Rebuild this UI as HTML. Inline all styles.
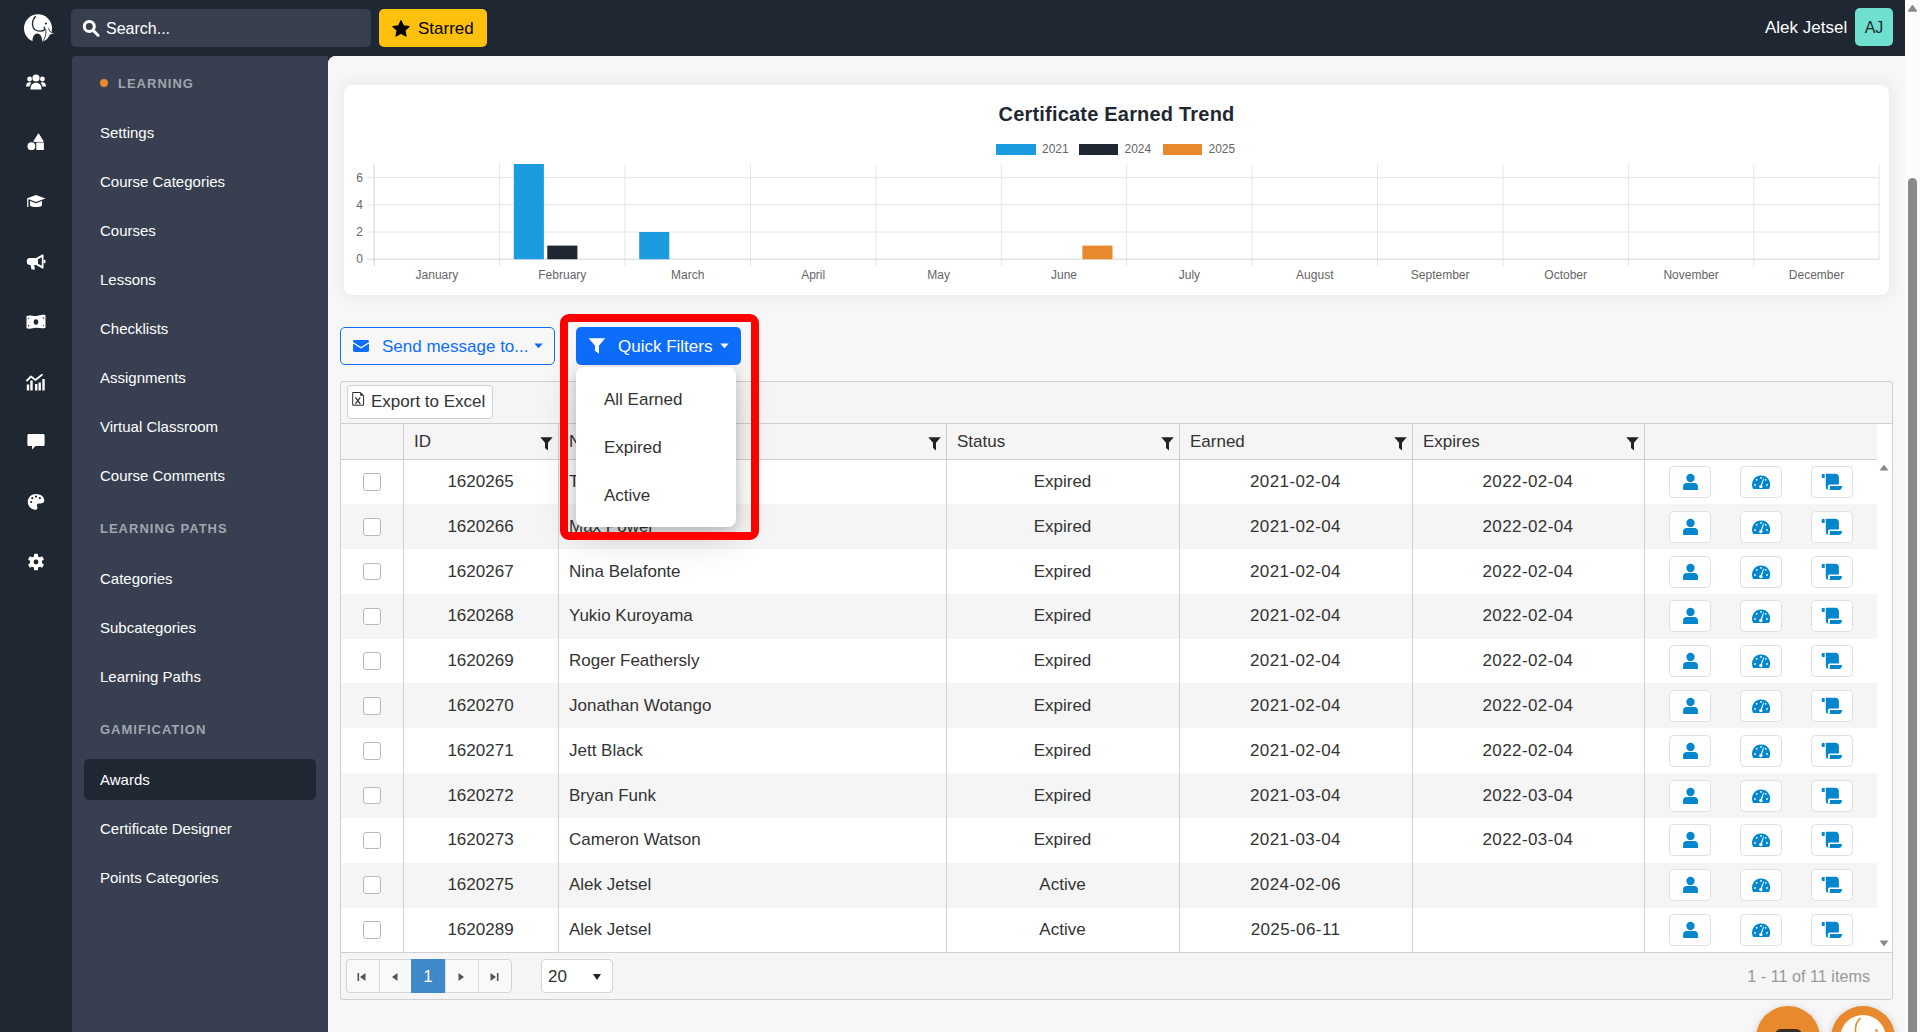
<!DOCTYPE html>
<html><head><meta charset="utf-8">
<style>
*{box-sizing:border-box;margin:0;padding:0}
html,body{width:1920px;height:1032px;overflow:hidden;background:#1f2733;font-family:"Liberation Sans",sans-serif}
.abs{position:absolute}
#top{left:0;top:0;width:1905px;height:56px;background:#1f2733}
#rail{left:0;top:0;width:72px;height:1032px;background:#1f2733}
#search{left:71px;top:9px;width:300px;height:38px;background:#373f4f;border-radius:5px}
#starred{left:379px;top:9px;width:108px;height:38px;background:#fdc10d;border-radius:5px}
#avatar{left:1855px;top:8px;width:38px;height:38px;background:#6fdfcf;border-radius:5px;color:#1f2733;font-size:16px;text-align:center;line-height:40px}
#side{left:72px;top:56px;width:256px;height:976px;background:#373f50;border-top-left-radius:4px}
#main{left:328px;top:56px;width:1577px;height:976px;background:#f7f7f7;border-top-left-radius:8px;overflow:hidden}
#vscroll{left:1905px;top:0;width:15px;height:1032px;background:#fcfcfc}
.abtn{width:41.7px;height:32px;background:#fff;border:1px solid #dde0e5;border-radius:4.5px}
.dt{letter-spacing:0.4px}
.nav{position:absolute;left:100px;color:#fff;font-size:15px;line-height:20px;white-space:nowrap}
.sec{position:absolute;left:100px;color:#a1a6ae;font-size:13px;line-height:20px;font-weight:bold;letter-spacing:1.0px;white-space:nowrap}
</style></head><body>
<div id="top" class="abs"></div>
<div id="rail" class="abs"></div>

<svg class="abs" style="left:18px;top:8px" width="40" height="40" viewBox="0 0 40 40">
 <circle cx="20" cy="20.3" r="14" fill="#fff"/>
 <path d="M14.4 35 C14.2 29 16 25.6 19.3 25.6 C22.6 25.6 24.2 29 24.2 35 Z" fill="#1f2733"/>
 <path d="M4 30 L4 40 L14.6 40 L14.4 33.5 Z" fill="#1f2733"/>
 <path d="M26.5 36 L32 26.5 L36 26.5 L36 36 Z" fill="#1f2733"/>
 <path d="M17.8 8.2 C13.5 12 13.5 19 17 21.8 C20 23.8 24.5 23.3 27 21.6 L26 18.8" fill="none" stroke="#1f2733" stroke-width="1.3"/>
 <path d="M27.5 21.6 C28.5 24 28 29 24.8 33" fill="none" stroke="#1f2733" stroke-width="0.9"/>
 <path d="M30.5 20 C31 22.8 32 24.2 34 24.8 L36 25.6 L29.5 26.6 Z" fill="#fff"/>
 <path d="M30.6 20.2 C31.2 22.6 32.2 24 33.6 24.5" fill="none" stroke="#1f2733" stroke-width="0.9"/>
 <circle cx="27.9" cy="15.5" r="1.1" fill="#1f2733"/>
</svg>
<!-- users -->
<svg class="abs" style="left:26px;top:74px" width="20" height="16" viewBox="0 0 20 16">
 <circle cx="10" cy="4" r="3.6" fill="#fff"/>
 <circle cx="3.6" cy="5" r="2.4" fill="#fff"/><circle cx="16.4" cy="5" r="2.4" fill="#fff"/>
 <path d="M4.5 15.5 C4.5 11 6.5 8.8 10 8.8 C13.5 8.8 15.5 11 15.5 15.5 Z" fill="#fff"/>
 <path d="M0 12.5 C0 9.8 1.3 8.3 3.5 8.3 C4.4 8.3 5 8.5 5.5 8.9 C4.3 10 3.7 11.3 3.6 12.5 Z" fill="#fff"/>
 <path d="M20 12.5 C20 9.8 18.7 8.3 16.5 8.3 C15.6 8.3 15 8.5 14.5 8.9 C15.7 10 16.3 11.3 16.4 12.5 Z" fill="#fff"/>
</svg>
<!-- shapes -->
<svg class="abs" style="left:27px;top:133px" width="18" height="18" viewBox="0 0 18 18">
 <path d="M11.5 0.8 L16.2 8.4 L6.8 8.4 Z" fill="#fff" stroke="#fff" stroke-width="1" stroke-linejoin="round"/>
 <circle cx="4.4" cy="13.2" r="3.9" fill="#fff"/>
 <rect x="9.3" y="9.6" width="7.6" height="7.4" rx="0.6" fill="#fff"/>
</svg>
<!-- graduation cap -->
<svg class="abs" style="left:26px;top:194px" width="20" height="16" viewBox="0 0 20 16">
 <path d="M10 1 L19.5 4.5 L10 8 L0.5 4.5 Z" fill="#fff"/>
 <path d="M4 7 L4 11.5 C6 13.5 14 13.5 16 11.5 L16 7 L10 9.3 Z" fill="#fff"/>
 <rect x="1.2" y="5" width="1.2" height="8" fill="#fff"/>
</svg>
<!-- bullhorn -->
<svg class="abs" style="left:26px;top:254px" width="20" height="16" viewBox="0 0 20 16">
 <path d="M17.5 0.5 L17.5 14.5 L16.3 14.5 L10 11 L10 4 L16.3 0.5 Z M10 4 L4 4 C2 4 0.8 5.3 0.8 7 L0.8 8 C0.8 9.7 2 11 4 11 L4.5 11 L5.5 15.5 L9 15.5 L8.2 11 L10 11 Z" fill="#fff"/>
 <path d="M12 5.2 L15.8 3.2 L15.8 11.8 L12 9.8 Z" fill="#1f2733"/>
 <rect x="17.5" y="5.8" width="2" height="3.4" rx="1" fill="#fff"/>
</svg>
<!-- money bill wave -->
<svg class="abs" style="left:26px;top:314px" width="20" height="16" viewBox="0 0 20 16">
 <path d="M0.5 2 C4 0.5 7 2.2 10 2 C13 1.8 16 0 19.5 1.2 L19.5 13.8 C16 15.2 13 13.5 10 13.8 C7 14.1 4 15.5 0.5 14.3 Z" fill="#fff"/>
 <ellipse cx="10" cy="8" rx="2.3" ry="2.8" fill="#1f2733"/>
 <circle cx="2.6" cy="11.8" r="0.8" fill="#1f2733"/><circle cx="17.4" cy="4" r="0.8" fill="#1f2733"/>
 <circle cx="2.6" cy="4.4" r="0.6" fill="#1f2733"/><circle cx="17.4" cy="11.6" r="0.6" fill="#1f2733"/>
</svg>
<!-- chart -->
<svg class="abs" style="left:26px;top:374px" width="20" height="17" viewBox="0 0 20 17">
 <path d="M1 6.5 L5 2.5 L9.5 6 L16 0.8" fill="none" stroke="#fff" stroke-width="1.8" stroke-linecap="round" stroke-linejoin="round"/>
 <rect x="0.8" y="10.5" width="2.4" height="6" fill="#fff"/>
 <rect x="4.3" y="6.5" width="2.4" height="10" fill="#fff"/>
 <rect x="9" y="10" width="2.4" height="6.5" fill="#fff"/>
 <rect x="12.5" y="8.5" width="2.4" height="8" fill="#fff"/>
 <rect x="16.3" y="5" width="2.4" height="11.5" fill="#fff"/>
</svg>
<!-- comment -->
<svg class="abs" style="left:27px;top:433px" width="18" height="18" viewBox="0 0 18 18">
 <path d="M2 1 L16 1 C17 1 17.6 1.6 17.6 2.6 L17.6 11.5 C17.6 12.5 17 13.1 16 13.1 L8.5 13.1 L5 16.4 L5 13.1 L2 13.1 C1 13.1 0.4 12.5 0.4 11.5 L0.4 2.6 C0.4 1.6 1 1 2 1 Z" fill="#fff"/>
</svg>
<!-- palette -->
<svg class="abs" style="left:27px;top:493px" width="18" height="18" viewBox="0 0 18 18">
 <path d="M9 1 C13.7 1 17.3 3.8 17.3 7.5 C17.3 9.8 15.4 10.5 13.5 10.5 L11.7 10.5 C10.6 10.5 9.9 11.3 9.9 12.3 C9.9 13 10.4 13.4 10.4 14.3 C10.4 15.5 9.7 16.8 9 16.8 C4.4 16.8 0.8 13.3 0.8 8.9 C0.8 4.5 4.4 1 9 1 Z" fill="#fff"/>
 <circle cx="4.2" cy="9" r="1.1" fill="#1f2733"/><circle cx="5.3" cy="5.2" r="1.1" fill="#1f2733"/>
 <circle cx="9" cy="3.6" r="1.1" fill="#1f2733"/><circle cx="12.8" cy="5.2" r="1.1" fill="#1f2733"/>
</svg>
<!-- gear -->
<svg class="abs" style="left:27px;top:553px" width="18" height="18" viewBox="0 0 18 18">
 <g fill="#fff" transform="translate(9,9)">
  <circle r="6"/>
  <rect x="-2" y="-8.2" width="4" height="4" rx="0.8"/>
  <rect x="-2" y="-8.2" width="4" height="4" rx="0.8" transform="rotate(60)"/>
  <rect x="-2" y="-8.2" width="4" height="4" rx="0.8" transform="rotate(120)"/>
  <rect x="-2" y="-8.2" width="4" height="4" rx="0.8" transform="rotate(180)"/>
  <rect x="-2" y="-8.2" width="4" height="4" rx="0.8" transform="rotate(240)"/>
  <rect x="-2" y="-8.2" width="4" height="4" rx="0.8" transform="rotate(300)"/>
 </g>
 <circle cx="9" cy="9" r="2.4" fill="#1f2733"/>
</svg>


<div id="search" class="abs"></div>
<svg class="abs" style="left:82px;top:19px" width="18" height="18" viewBox="0 0 18 18">
 <circle cx="7.3" cy="7.4" r="5" fill="none" stroke="#fff" stroke-width="3"/>
 <path d="M11 11.3 L16 16.3" stroke="#fff" stroke-width="3" stroke-linecap="round"/>
</svg>
<div class="abs txt" style="left:106px;top:19px;font-size:16px;color:#fff;line-height:20px">Search...</div>
<div id="starred" class="abs"></div>
<svg class="abs" style="left:392px;top:19.5px" width="18" height="17" viewBox="0 0 20 19">
 <path d="M10 0.8 L12.7 6.6 L19 7.3 L14.3 11.6 L15.6 17.9 L10 14.7 L4.4 17.9 L5.7 11.6 L1 7.3 L7.3 6.6 Z" fill="#000" stroke="#000" stroke-width="1.4" stroke-linejoin="round"/>
</svg>
<div class="abs" style="left:418px;top:19px;font-size:17px;color:#000;line-height:20px">Starred</div>
<div class="abs" style="left:1765px;top:18px;font-size:17px;color:#fff;line-height:20px">Alek Jetsel</div>
<div id="avatar" class="abs">AJ</div>

<div id="side" class="abs"></div>
<div class="abs" style="left:100px;top:79px;width:8.3px;height:8.3px;border-radius:50%;background:#e98b2d"></div>
<div class="sec" style="left:118px;top:73.5px">LEARNING</div>
<div class="nav" style="top:123px">Settings</div>
<div class="nav" style="top:172px">Course Categories</div>
<div class="nav" style="top:221px">Courses</div>
<div class="nav" style="top:270px">Lessons</div>
<div class="nav" style="top:319px">Checklists</div>
<div class="nav" style="top:368px">Assignments</div>
<div class="nav" style="top:417px">Virtual Classroom</div>
<div class="nav" style="top:466px">Course Comments</div>
<div class="sec" style="top:518.5px">LEARNING PATHS</div>
<div class="nav" style="top:569px">Categories</div>
<div class="nav" style="top:618px">Subcategories</div>
<div class="nav" style="top:667px">Learning Paths</div>
<div class="sec" style="top:719.5px">GAMIFICATION</div>
<div class="abs" style="left:84px;top:759px;width:232px;height:41px;background:#1f2733;border-radius:5px"></div>
<div class="nav" style="top:770px">Awards</div>
<div class="nav" style="top:819px">Certificate Designer</div>
<div class="nav" style="top:868px">Points Categories</div>

<div id="main" class="abs"></div>
<div class="abs" style="left:328px;top:56px;width:1577px;height:976px;background:#f7f7f7;border-top-left-radius:8px;box-shadow:inset 0 0 0 0 transparent"></div>
<div class="abs" style="left:344px;top:85px;width:1545px;height:210px;background:#fff;border-radius:8px;box-shadow:0 0 16px 3px rgba(0,0,0,0.055)"></div>
<div class="abs" style="left:344px;top:103px;width:1545px;text-align:center;font-size:20px;font-weight:bold;color:#1f2733;line-height:22px;letter-spacing:0.2px">Certificate Earned Trend</div>
<div class="abs" style="left:996px;top:144px;width:39.5px;height:11px;background:#1b9be0"></div>
<div class="abs" style="left:1042px;top:142px;font-size:12px;color:#666;line-height:14px">2021</div>
<div class="abs" style="left:1078.5px;top:144px;width:39.5px;height:11px;background:#1f2733"></div>
<div class="abs" style="left:1124.5px;top:142px;font-size:12px;color:#666;line-height:14px">2024</div>
<div class="abs" style="left:1162.5px;top:144px;width:39.5px;height:11px;background:#e8892e"></div>
<div class="abs" style="left:1208.5px;top:142px;font-size:12px;color:#666;line-height:14px">2025</div>
<svg class="abs" style="left:0;top:0" width="1920" height="300" viewBox="0 0 1920 300">
<line x1="374.2" y1="164.2" x2="374.2" y2="266" stroke="#d6d6d6" stroke-width="1"/>
<line x1="499.6" y1="164.2" x2="499.6" y2="266" stroke="#e6e6e6" stroke-width="1"/>
<line x1="625.0" y1="164.2" x2="625.0" y2="266" stroke="#e6e6e6" stroke-width="1"/>
<line x1="750.5" y1="164.2" x2="750.5" y2="266" stroke="#e6e6e6" stroke-width="1"/>
<line x1="875.9" y1="164.2" x2="875.9" y2="266" stroke="#e6e6e6" stroke-width="1"/>
<line x1="1001.3" y1="164.2" x2="1001.3" y2="266" stroke="#e6e6e6" stroke-width="1"/>
<line x1="1126.7" y1="164.2" x2="1126.7" y2="266" stroke="#e6e6e6" stroke-width="1"/>
<line x1="1252.1" y1="164.2" x2="1252.1" y2="266" stroke="#e6e6e6" stroke-width="1"/>
<line x1="1377.5" y1="164.2" x2="1377.5" y2="266" stroke="#e6e6e6" stroke-width="1"/>
<line x1="1503.0" y1="164.2" x2="1503.0" y2="266" stroke="#e6e6e6" stroke-width="1"/>
<line x1="1628.4" y1="164.2" x2="1628.4" y2="266" stroke="#e6e6e6" stroke-width="1"/>
<line x1="1753.8" y1="164.2" x2="1753.8" y2="266" stroke="#e6e6e6" stroke-width="1"/>
<line x1="1879.2" y1="164.2" x2="1879.2" y2="259.2" stroke="#e6e6e6" stroke-width="1"/>
<line x1="367" y1="259.2" x2="1879.2" y2="259.2" stroke="#d6d6d6" stroke-width="1"/>
<text x="363" y="263.4" text-anchor="end" font-family="Liberation Sans" font-size="12" fill="#666">0</text>
<line x1="367" y1="232.0" x2="1879.2" y2="232.0" stroke="#e6e6e6" stroke-width="1"/>
<text x="363" y="236.2" text-anchor="end" font-family="Liberation Sans" font-size="12" fill="#666">2</text>
<line x1="367" y1="204.8" x2="1879.2" y2="204.8" stroke="#e6e6e6" stroke-width="1"/>
<text x="363" y="209.0" text-anchor="end" font-family="Liberation Sans" font-size="12" fill="#666">4</text>
<line x1="367" y1="177.6" x2="1879.2" y2="177.6" stroke="#e6e6e6" stroke-width="1"/>
<text x="363" y="181.8" text-anchor="end" font-family="Liberation Sans" font-size="12" fill="#666">6</text>
<text x="436.9" y="278.8" text-anchor="middle" font-family="Liberation Sans" font-size="12" fill="#666">January</text>
<text x="562.3" y="278.8" text-anchor="middle" font-family="Liberation Sans" font-size="12" fill="#666">February</text>
<text x="687.7" y="278.8" text-anchor="middle" font-family="Liberation Sans" font-size="12" fill="#666">March</text>
<text x="813.2" y="278.8" text-anchor="middle" font-family="Liberation Sans" font-size="12" fill="#666">April</text>
<text x="938.6" y="278.8" text-anchor="middle" font-family="Liberation Sans" font-size="12" fill="#666">May</text>
<text x="1064.0" y="278.8" text-anchor="middle" font-family="Liberation Sans" font-size="12" fill="#666">June</text>
<text x="1189.4" y="278.8" text-anchor="middle" font-family="Liberation Sans" font-size="12" fill="#666">July</text>
<text x="1314.8" y="278.8" text-anchor="middle" font-family="Liberation Sans" font-size="12" fill="#666">August</text>
<text x="1440.2" y="278.8" text-anchor="middle" font-family="Liberation Sans" font-size="12" fill="#666">September</text>
<text x="1565.7" y="278.8" text-anchor="middle" font-family="Liberation Sans" font-size="12" fill="#666">October</text>
<text x="1691.1" y="278.8" text-anchor="middle" font-family="Liberation Sans" font-size="12" fill="#666">November</text>
<text x="1816.5" y="278.8" text-anchor="middle" font-family="Liberation Sans" font-size="12" fill="#666">December</text>
<rect x="513.8" y="164.0" width="30.1" height="95.2" fill="#1b9be0"/>
<rect x="547.3" y="245.6" width="30.1" height="13.6" fill="#1f2733"/>
<rect x="639.2" y="232.0" width="30.1" height="27.2" fill="#1b9be0"/>
<rect x="1082.4" y="245.6" width="30.1" height="13.6" fill="#e8892e"/>
</svg>
<div class="abs" style="left:340px;top:327px;width:215px;height:38px;border:1px solid #0d6efd;border-radius:5px"></div>
<svg class="abs" style="left:353px;top:340px" width="16" height="12" viewBox="0 0 16 12">
 <path d="M1.5 0 L14.5 0 C15.3 0 16 0.7 16 1.5 L16 2 L8 7 L0 2 L0 1.5 C0 0.7 0.7 0 1.5 0 Z M0 3.6 L8 8.6 L16 3.6 L16 10.6 C16 11.4 15.3 12 14.5 12 L1.5 12 C0.7 12 0 11.4 0 10.6 Z" fill="#0d6efd"/>
</svg>
<div class="abs" style="left:382px;top:337px;font-size:17px;line-height:20px;color:#0d6efd;white-space:nowrap">Send message to...</div>
<svg class="abs" style="left:534px;top:343px" width="9" height="6" viewBox="0 0 9 6"><path d="M0.3 0.5 L8.7 0.5 L4.5 5.2 Z" fill="#0d6efd"/></svg>
<div class="abs" style="left:576px;top:327px;width:165px;height:38px;background:#0d6efd;border-radius:5px"></div>
<svg class="abs" style="left:588px;top:338px" width="18" height="16" viewBox="0 0 18 16">
 <path d="M0.6 0.3 L17.2 0.3 L11 7.6 L11 15.8 L6.9 12.8 L6.9 7.6 Z" fill="#fff"/>
</svg>
<div class="abs" style="left:618px;top:337px;font-size:17px;line-height:20px;color:#fff;white-space:nowrap">Quick Filters</div>
<svg class="abs" style="left:720px;top:343px" width="9" height="6" viewBox="0 0 9 6"><path d="M0.3 0.5 L8.7 0.5 L4.5 5.2 Z" fill="#fff"/></svg>
<div class="abs" style="left:340px;top:381px;height:619px;width:1553px;background:#f5f5f5;border:1px solid #cfcfcf;border-radius:3px"></div>
<div class="abs" style="left:347px;top:385px;width:146px;height:34px;background:#fff;border:1px solid #d0d0d0;border-radius:4px"></div>
<svg class="abs" style="left:348px;top:388px" width="20" height="20" viewBox="0 0 20 20">
 <path d="M4.7 4.5 L12.6 4.5 L15.6 7.5 L15.6 17.2 L4.7 17.2 Z" fill="#fff" stroke="#2a2a2a" stroke-width="1"/>
 <path d="M12.2 4.3 L12.2 7.8 L15.8 7.8 Z" fill="#2a2a2a"/>
 <path d="M7.4 9.3 L12.3 15.8 M12.3 9.3 L7.4 15.8" stroke="#2a2a2a" stroke-width="1.2"/>
</svg>
<div class="abs" style="left:371px;top:392px;font-size:17px;line-height:20px;color:#333;white-space:nowrap">Export to Excel</div>
<div class="abs" style="left:341px;top:423px;width:1551px;height:1px;background:#cfcfcf"></div>
<div class="abs" style="left:341px;top:459px;width:1551px;height:1px;background:#cfcfcf"></div>
<div class="abs" style="left:1877px;top:424px;width:15px;height:35px;background:#fff"></div>
<div class="abs" style="left:403px;top:424px;width:1px;height:528px;background:#cfcfcf"></div>
<div class="abs" style="left:558px;top:424px;width:1px;height:528px;background:#cfcfcf"></div>
<div class="abs" style="left:946px;top:424px;width:1px;height:528px;background:#cfcfcf"></div>
<div class="abs" style="left:1179px;top:424px;width:1px;height:528px;background:#cfcfcf"></div>
<div class="abs" style="left:1412px;top:424px;width:1px;height:528px;background:#cfcfcf"></div>
<div class="abs" style="left:1644px;top:424px;width:1px;height:528px;background:#cfcfcf"></div>
<div class="abs" style="left:414px;top:432px;font-size:17px;line-height:20px;color:#333">ID</div>
<svg class="abs" style="left:540px;top:437px" width="13" height="14" viewBox="0 0 13 14"><path d="M0.3 0.3 L12.7 0.3 L8 5.8 L8 13.5 L5 11 L5 5.8 Z" fill="#222"/></svg>
<div class="abs" style="left:569px;top:432px;font-size:17px;line-height:20px;color:#333">Name</div>
<svg class="abs" style="left:928px;top:437px" width="13" height="14" viewBox="0 0 13 14"><path d="M0.3 0.3 L12.7 0.3 L8 5.8 L8 13.5 L5 11 L5 5.8 Z" fill="#222"/></svg>
<div class="abs" style="left:957px;top:432px;font-size:17px;line-height:20px;color:#333">Status</div>
<svg class="abs" style="left:1161px;top:437px" width="13" height="14" viewBox="0 0 13 14"><path d="M0.3 0.3 L12.7 0.3 L8 5.8 L8 13.5 L5 11 L5 5.8 Z" fill="#222"/></svg>
<div class="abs" style="left:1190px;top:432px;font-size:17px;line-height:20px;color:#333">Earned</div>
<svg class="abs" style="left:1394px;top:437px" width="13" height="14" viewBox="0 0 13 14"><path d="M0.3 0.3 L12.7 0.3 L8 5.8 L8 13.5 L5 11 L5 5.8 Z" fill="#222"/></svg>
<div class="abs" style="left:1423px;top:432px;font-size:17px;line-height:20px;color:#333">Expires</div>
<svg class="abs" style="left:1626px;top:437px" width="13" height="14" viewBox="0 0 13 14"><path d="M0.3 0.3 L12.7 0.3 L8 5.8 L8 13.5 L5 11 L5 5.8 Z" fill="#222"/></svg>
<div class="abs" style="left:341px;top:459.5px;width:1536px;height:44.8px;background:#fff"></div>
<div class="abs" style="left:363px;top:473.2px;width:17.5px;height:17.5px;background:#fff;border:1px solid #b9b9b9;border-radius:3px"></div>
<div class="abs" style="left:403px;width:155px;top:471.9px;font-size:17px;line-height:20px;color:#333;text-align:center">1620265</div>
<div class="abs" style="left:569px;top:471.9px;font-size:17px;line-height:20px;color:#333;white-space:nowrap">Tom Maxwell</div>
<div class="abs" style="left:946px;width:233px;top:471.9px;font-size:17px;line-height:20px;color:#333;text-align:center">Expired</div>
<div class="abs dt" style="left:1179px;width:233px;top:471.9px;font-size:17px;line-height:20px;color:#333;text-align:center">2021-02-04</div>
<div class="abs dt" style="left:1412px;width:232px;top:471.9px;font-size:17px;line-height:20px;color:#333;text-align:center">2022-02-04</div>
<div class="abs abtn" style="left:1669.1px;top:465.9px"></div>
<svg class="abs" style="left:1669.1px;top:465.9px" width="42" height="32" viewBox="0 0 42 32"><circle cx="21.5" cy="12.0" r="4.15" fill="#0287cf"/><path d="M14.1 24 L14.1 20.6 Q14.1 17 17.7 17 L25.3 17 Q28.9 17 28.9 20.6 L28.9 24 Z" fill="#0287cf"/></svg>
<div class="abs abtn" style="left:1740.1px;top:465.9px"></div>
<svg class="abs" style="left:1740.1px;top:465.9px" width="42" height="32" viewBox="0 0 42 32"><path d="M13.2 23 A9.1 9.1 0 1 1 29.0 23 Z" fill="#0287cf"/><g fill="#fff"><circle cx="16.65" cy="13.85" r="0.9"/><circle cx="21.0" cy="11.9" r="0.9"/><circle cx="25.7" cy="13.85" r="0.9"/><circle cx="15.0" cy="19.0" r="0.9"/><circle cx="27.0" cy="19.0" r="0.9"/><path d="M20.2 20.3 L23.3 12.4 L24.1 12.6 L21.6 20.7 Z"/><circle cx="20.85" cy="20.6" r="1.7"/></g></svg>
<div class="abs abtn" style="left:1811.1px;top:465.9px"></div>
<svg class="abs" style="left:1811.1px;top:465.9px" width="42" height="32" viewBox="0 0 42 32"><g fill="#0287cf"><path d="M10.7 9 Q10.7 8.1 11.6 8.1 L13.7 8.1 L13.7 11.9 L11.6 11.9 Q10.7 11.9 10.7 11 Z"/><path d="M14.8 7.8 L24.1 7.8 Q27.9 7.8 27.9 11.6 L27.9 18.5 L18.6 18.5 Q16.9 18.5 16.9 20.2 L16.9 22.3 Q16.9 23.4 17.6 24.0 Q14.8 23.6 14.8 20.8 Z"/><path d="M18.4 24.0 Q19.0 23.2 19.0 22.0 L19.0 20.1 L31 20.1 Q31 24.0 27.6 24.0 Z"/></g></svg>
<div class="abs" style="left:341px;top:504.3px;width:1536px;height:44.8px;background:#f5f5f5"></div>
<div class="abs" style="left:363px;top:518.0px;width:17.5px;height:17.5px;background:#fff;border:1px solid #b9b9b9;border-radius:3px"></div>
<div class="abs" style="left:403px;width:155px;top:516.7px;font-size:17px;line-height:20px;color:#333;text-align:center">1620266</div>
<div class="abs" style="left:569px;top:516.7px;font-size:17px;line-height:20px;color:#333;white-space:nowrap">Max Power</div>
<div class="abs" style="left:946px;width:233px;top:516.7px;font-size:17px;line-height:20px;color:#333;text-align:center">Expired</div>
<div class="abs dt" style="left:1179px;width:233px;top:516.7px;font-size:17px;line-height:20px;color:#333;text-align:center">2021-02-04</div>
<div class="abs dt" style="left:1412px;width:232px;top:516.7px;font-size:17px;line-height:20px;color:#333;text-align:center">2022-02-04</div>
<div class="abs abtn" style="left:1669.1px;top:510.7px"></div>
<svg class="abs" style="left:1669.1px;top:510.7px" width="42" height="32" viewBox="0 0 42 32"><circle cx="21.5" cy="12.0" r="4.15" fill="#0287cf"/><path d="M14.1 24 L14.1 20.6 Q14.1 17 17.7 17 L25.3 17 Q28.9 17 28.9 20.6 L28.9 24 Z" fill="#0287cf"/></svg>
<div class="abs abtn" style="left:1740.1px;top:510.7px"></div>
<svg class="abs" style="left:1740.1px;top:510.7px" width="42" height="32" viewBox="0 0 42 32"><path d="M13.2 23 A9.1 9.1 0 1 1 29.0 23 Z" fill="#0287cf"/><g fill="#fff"><circle cx="16.65" cy="13.85" r="0.9"/><circle cx="21.0" cy="11.9" r="0.9"/><circle cx="25.7" cy="13.85" r="0.9"/><circle cx="15.0" cy="19.0" r="0.9"/><circle cx="27.0" cy="19.0" r="0.9"/><path d="M20.2 20.3 L23.3 12.4 L24.1 12.6 L21.6 20.7 Z"/><circle cx="20.85" cy="20.6" r="1.7"/></g></svg>
<div class="abs abtn" style="left:1811.1px;top:510.7px"></div>
<svg class="abs" style="left:1811.1px;top:510.7px" width="42" height="32" viewBox="0 0 42 32"><g fill="#0287cf"><path d="M10.7 9 Q10.7 8.1 11.6 8.1 L13.7 8.1 L13.7 11.9 L11.6 11.9 Q10.7 11.9 10.7 11 Z"/><path d="M14.8 7.8 L24.1 7.8 Q27.9 7.8 27.9 11.6 L27.9 18.5 L18.6 18.5 Q16.9 18.5 16.9 20.2 L16.9 22.3 Q16.9 23.4 17.6 24.0 Q14.8 23.6 14.8 20.8 Z"/><path d="M18.4 24.0 Q19.0 23.2 19.0 22.0 L19.0 20.1 L31 20.1 Q31 24.0 27.6 24.0 Z"/></g></svg>
<div class="abs" style="left:341px;top:549.1px;width:1536px;height:44.8px;background:#fff"></div>
<div class="abs" style="left:363px;top:562.8px;width:17.5px;height:17.5px;background:#fff;border:1px solid #b9b9b9;border-radius:3px"></div>
<div class="abs" style="left:403px;width:155px;top:561.5px;font-size:17px;line-height:20px;color:#333;text-align:center">1620267</div>
<div class="abs" style="left:569px;top:561.5px;font-size:17px;line-height:20px;color:#333;white-space:nowrap">Nina Belafonte</div>
<div class="abs" style="left:946px;width:233px;top:561.5px;font-size:17px;line-height:20px;color:#333;text-align:center">Expired</div>
<div class="abs dt" style="left:1179px;width:233px;top:561.5px;font-size:17px;line-height:20px;color:#333;text-align:center">2021-02-04</div>
<div class="abs dt" style="left:1412px;width:232px;top:561.5px;font-size:17px;line-height:20px;color:#333;text-align:center">2022-02-04</div>
<div class="abs abtn" style="left:1669.1px;top:555.5px"></div>
<svg class="abs" style="left:1669.1px;top:555.5px" width="42" height="32" viewBox="0 0 42 32"><circle cx="21.5" cy="12.0" r="4.15" fill="#0287cf"/><path d="M14.1 24 L14.1 20.6 Q14.1 17 17.7 17 L25.3 17 Q28.9 17 28.9 20.6 L28.9 24 Z" fill="#0287cf"/></svg>
<div class="abs abtn" style="left:1740.1px;top:555.5px"></div>
<svg class="abs" style="left:1740.1px;top:555.5px" width="42" height="32" viewBox="0 0 42 32"><path d="M13.2 23 A9.1 9.1 0 1 1 29.0 23 Z" fill="#0287cf"/><g fill="#fff"><circle cx="16.65" cy="13.85" r="0.9"/><circle cx="21.0" cy="11.9" r="0.9"/><circle cx="25.7" cy="13.85" r="0.9"/><circle cx="15.0" cy="19.0" r="0.9"/><circle cx="27.0" cy="19.0" r="0.9"/><path d="M20.2 20.3 L23.3 12.4 L24.1 12.6 L21.6 20.7 Z"/><circle cx="20.85" cy="20.6" r="1.7"/></g></svg>
<div class="abs abtn" style="left:1811.1px;top:555.5px"></div>
<svg class="abs" style="left:1811.1px;top:555.5px" width="42" height="32" viewBox="0 0 42 32"><g fill="#0287cf"><path d="M10.7 9 Q10.7 8.1 11.6 8.1 L13.7 8.1 L13.7 11.9 L11.6 11.9 Q10.7 11.9 10.7 11 Z"/><path d="M14.8 7.8 L24.1 7.8 Q27.9 7.8 27.9 11.6 L27.9 18.5 L18.6 18.5 Q16.9 18.5 16.9 20.2 L16.9 22.3 Q16.9 23.4 17.6 24.0 Q14.8 23.6 14.8 20.8 Z"/><path d="M18.4 24.0 Q19.0 23.2 19.0 22.0 L19.0 20.1 L31 20.1 Q31 24.0 27.6 24.0 Z"/></g></svg>
<div class="abs" style="left:341px;top:593.9px;width:1536px;height:44.8px;background:#f5f5f5"></div>
<div class="abs" style="left:363px;top:607.6px;width:17.5px;height:17.5px;background:#fff;border:1px solid #b9b9b9;border-radius:3px"></div>
<div class="abs" style="left:403px;width:155px;top:606.3px;font-size:17px;line-height:20px;color:#333;text-align:center">1620268</div>
<div class="abs" style="left:569px;top:606.3px;font-size:17px;line-height:20px;color:#333;white-space:nowrap">Yukio Kuroyama</div>
<div class="abs" style="left:946px;width:233px;top:606.3px;font-size:17px;line-height:20px;color:#333;text-align:center">Expired</div>
<div class="abs dt" style="left:1179px;width:233px;top:606.3px;font-size:17px;line-height:20px;color:#333;text-align:center">2021-02-04</div>
<div class="abs dt" style="left:1412px;width:232px;top:606.3px;font-size:17px;line-height:20px;color:#333;text-align:center">2022-02-04</div>
<div class="abs abtn" style="left:1669.1px;top:600.3px"></div>
<svg class="abs" style="left:1669.1px;top:600.3px" width="42" height="32" viewBox="0 0 42 32"><circle cx="21.5" cy="12.0" r="4.15" fill="#0287cf"/><path d="M14.1 24 L14.1 20.6 Q14.1 17 17.7 17 L25.3 17 Q28.9 17 28.9 20.6 L28.9 24 Z" fill="#0287cf"/></svg>
<div class="abs abtn" style="left:1740.1px;top:600.3px"></div>
<svg class="abs" style="left:1740.1px;top:600.3px" width="42" height="32" viewBox="0 0 42 32"><path d="M13.2 23 A9.1 9.1 0 1 1 29.0 23 Z" fill="#0287cf"/><g fill="#fff"><circle cx="16.65" cy="13.85" r="0.9"/><circle cx="21.0" cy="11.9" r="0.9"/><circle cx="25.7" cy="13.85" r="0.9"/><circle cx="15.0" cy="19.0" r="0.9"/><circle cx="27.0" cy="19.0" r="0.9"/><path d="M20.2 20.3 L23.3 12.4 L24.1 12.6 L21.6 20.7 Z"/><circle cx="20.85" cy="20.6" r="1.7"/></g></svg>
<div class="abs abtn" style="left:1811.1px;top:600.3px"></div>
<svg class="abs" style="left:1811.1px;top:600.3px" width="42" height="32" viewBox="0 0 42 32"><g fill="#0287cf"><path d="M10.7 9 Q10.7 8.1 11.6 8.1 L13.7 8.1 L13.7 11.9 L11.6 11.9 Q10.7 11.9 10.7 11 Z"/><path d="M14.8 7.8 L24.1 7.8 Q27.9 7.8 27.9 11.6 L27.9 18.5 L18.6 18.5 Q16.9 18.5 16.9 20.2 L16.9 22.3 Q16.9 23.4 17.6 24.0 Q14.8 23.6 14.8 20.8 Z"/><path d="M18.4 24.0 Q19.0 23.2 19.0 22.0 L19.0 20.1 L31 20.1 Q31 24.0 27.6 24.0 Z"/></g></svg>
<div class="abs" style="left:341px;top:638.7px;width:1536px;height:44.8px;background:#fff"></div>
<div class="abs" style="left:363px;top:652.4px;width:17.5px;height:17.5px;background:#fff;border:1px solid #b9b9b9;border-radius:3px"></div>
<div class="abs" style="left:403px;width:155px;top:651.1px;font-size:17px;line-height:20px;color:#333;text-align:center">1620269</div>
<div class="abs" style="left:569px;top:651.1px;font-size:17px;line-height:20px;color:#333;white-space:nowrap">Roger Feathersly</div>
<div class="abs" style="left:946px;width:233px;top:651.1px;font-size:17px;line-height:20px;color:#333;text-align:center">Expired</div>
<div class="abs dt" style="left:1179px;width:233px;top:651.1px;font-size:17px;line-height:20px;color:#333;text-align:center">2021-02-04</div>
<div class="abs dt" style="left:1412px;width:232px;top:651.1px;font-size:17px;line-height:20px;color:#333;text-align:center">2022-02-04</div>
<div class="abs abtn" style="left:1669.1px;top:645.1px"></div>
<svg class="abs" style="left:1669.1px;top:645.1px" width="42" height="32" viewBox="0 0 42 32"><circle cx="21.5" cy="12.0" r="4.15" fill="#0287cf"/><path d="M14.1 24 L14.1 20.6 Q14.1 17 17.7 17 L25.3 17 Q28.9 17 28.9 20.6 L28.9 24 Z" fill="#0287cf"/></svg>
<div class="abs abtn" style="left:1740.1px;top:645.1px"></div>
<svg class="abs" style="left:1740.1px;top:645.1px" width="42" height="32" viewBox="0 0 42 32"><path d="M13.2 23 A9.1 9.1 0 1 1 29.0 23 Z" fill="#0287cf"/><g fill="#fff"><circle cx="16.65" cy="13.85" r="0.9"/><circle cx="21.0" cy="11.9" r="0.9"/><circle cx="25.7" cy="13.85" r="0.9"/><circle cx="15.0" cy="19.0" r="0.9"/><circle cx="27.0" cy="19.0" r="0.9"/><path d="M20.2 20.3 L23.3 12.4 L24.1 12.6 L21.6 20.7 Z"/><circle cx="20.85" cy="20.6" r="1.7"/></g></svg>
<div class="abs abtn" style="left:1811.1px;top:645.1px"></div>
<svg class="abs" style="left:1811.1px;top:645.1px" width="42" height="32" viewBox="0 0 42 32"><g fill="#0287cf"><path d="M10.7 9 Q10.7 8.1 11.6 8.1 L13.7 8.1 L13.7 11.9 L11.6 11.9 Q10.7 11.9 10.7 11 Z"/><path d="M14.8 7.8 L24.1 7.8 Q27.9 7.8 27.9 11.6 L27.9 18.5 L18.6 18.5 Q16.9 18.5 16.9 20.2 L16.9 22.3 Q16.9 23.4 17.6 24.0 Q14.8 23.6 14.8 20.8 Z"/><path d="M18.4 24.0 Q19.0 23.2 19.0 22.0 L19.0 20.1 L31 20.1 Q31 24.0 27.6 24.0 Z"/></g></svg>
<div class="abs" style="left:341px;top:683.5px;width:1536px;height:44.8px;background:#f5f5f5"></div>
<div class="abs" style="left:363px;top:697.2px;width:17.5px;height:17.5px;background:#fff;border:1px solid #b9b9b9;border-radius:3px"></div>
<div class="abs" style="left:403px;width:155px;top:695.9px;font-size:17px;line-height:20px;color:#333;text-align:center">1620270</div>
<div class="abs" style="left:569px;top:695.9px;font-size:17px;line-height:20px;color:#333;white-space:nowrap">Jonathan Wotango</div>
<div class="abs" style="left:946px;width:233px;top:695.9px;font-size:17px;line-height:20px;color:#333;text-align:center">Expired</div>
<div class="abs dt" style="left:1179px;width:233px;top:695.9px;font-size:17px;line-height:20px;color:#333;text-align:center">2021-02-04</div>
<div class="abs dt" style="left:1412px;width:232px;top:695.9px;font-size:17px;line-height:20px;color:#333;text-align:center">2022-02-04</div>
<div class="abs abtn" style="left:1669.1px;top:689.9px"></div>
<svg class="abs" style="left:1669.1px;top:689.9px" width="42" height="32" viewBox="0 0 42 32"><circle cx="21.5" cy="12.0" r="4.15" fill="#0287cf"/><path d="M14.1 24 L14.1 20.6 Q14.1 17 17.7 17 L25.3 17 Q28.9 17 28.9 20.6 L28.9 24 Z" fill="#0287cf"/></svg>
<div class="abs abtn" style="left:1740.1px;top:689.9px"></div>
<svg class="abs" style="left:1740.1px;top:689.9px" width="42" height="32" viewBox="0 0 42 32"><path d="M13.2 23 A9.1 9.1 0 1 1 29.0 23 Z" fill="#0287cf"/><g fill="#fff"><circle cx="16.65" cy="13.85" r="0.9"/><circle cx="21.0" cy="11.9" r="0.9"/><circle cx="25.7" cy="13.85" r="0.9"/><circle cx="15.0" cy="19.0" r="0.9"/><circle cx="27.0" cy="19.0" r="0.9"/><path d="M20.2 20.3 L23.3 12.4 L24.1 12.6 L21.6 20.7 Z"/><circle cx="20.85" cy="20.6" r="1.7"/></g></svg>
<div class="abs abtn" style="left:1811.1px;top:689.9px"></div>
<svg class="abs" style="left:1811.1px;top:689.9px" width="42" height="32" viewBox="0 0 42 32"><g fill="#0287cf"><path d="M10.7 9 Q10.7 8.1 11.6 8.1 L13.7 8.1 L13.7 11.9 L11.6 11.9 Q10.7 11.9 10.7 11 Z"/><path d="M14.8 7.8 L24.1 7.8 Q27.9 7.8 27.9 11.6 L27.9 18.5 L18.6 18.5 Q16.9 18.5 16.9 20.2 L16.9 22.3 Q16.9 23.4 17.6 24.0 Q14.8 23.6 14.8 20.8 Z"/><path d="M18.4 24.0 Q19.0 23.2 19.0 22.0 L19.0 20.1 L31 20.1 Q31 24.0 27.6 24.0 Z"/></g></svg>
<div class="abs" style="left:341px;top:728.3px;width:1536px;height:44.8px;background:#fff"></div>
<div class="abs" style="left:363px;top:742.0px;width:17.5px;height:17.5px;background:#fff;border:1px solid #b9b9b9;border-radius:3px"></div>
<div class="abs" style="left:403px;width:155px;top:740.7px;font-size:17px;line-height:20px;color:#333;text-align:center">1620271</div>
<div class="abs" style="left:569px;top:740.7px;font-size:17px;line-height:20px;color:#333;white-space:nowrap">Jett Black</div>
<div class="abs" style="left:946px;width:233px;top:740.7px;font-size:17px;line-height:20px;color:#333;text-align:center">Expired</div>
<div class="abs dt" style="left:1179px;width:233px;top:740.7px;font-size:17px;line-height:20px;color:#333;text-align:center">2021-02-04</div>
<div class="abs dt" style="left:1412px;width:232px;top:740.7px;font-size:17px;line-height:20px;color:#333;text-align:center">2022-02-04</div>
<div class="abs abtn" style="left:1669.1px;top:734.7px"></div>
<svg class="abs" style="left:1669.1px;top:734.7px" width="42" height="32" viewBox="0 0 42 32"><circle cx="21.5" cy="12.0" r="4.15" fill="#0287cf"/><path d="M14.1 24 L14.1 20.6 Q14.1 17 17.7 17 L25.3 17 Q28.9 17 28.9 20.6 L28.9 24 Z" fill="#0287cf"/></svg>
<div class="abs abtn" style="left:1740.1px;top:734.7px"></div>
<svg class="abs" style="left:1740.1px;top:734.7px" width="42" height="32" viewBox="0 0 42 32"><path d="M13.2 23 A9.1 9.1 0 1 1 29.0 23 Z" fill="#0287cf"/><g fill="#fff"><circle cx="16.65" cy="13.85" r="0.9"/><circle cx="21.0" cy="11.9" r="0.9"/><circle cx="25.7" cy="13.85" r="0.9"/><circle cx="15.0" cy="19.0" r="0.9"/><circle cx="27.0" cy="19.0" r="0.9"/><path d="M20.2 20.3 L23.3 12.4 L24.1 12.6 L21.6 20.7 Z"/><circle cx="20.85" cy="20.6" r="1.7"/></g></svg>
<div class="abs abtn" style="left:1811.1px;top:734.7px"></div>
<svg class="abs" style="left:1811.1px;top:734.7px" width="42" height="32" viewBox="0 0 42 32"><g fill="#0287cf"><path d="M10.7 9 Q10.7 8.1 11.6 8.1 L13.7 8.1 L13.7 11.9 L11.6 11.9 Q10.7 11.9 10.7 11 Z"/><path d="M14.8 7.8 L24.1 7.8 Q27.9 7.8 27.9 11.6 L27.9 18.5 L18.6 18.5 Q16.9 18.5 16.9 20.2 L16.9 22.3 Q16.9 23.4 17.6 24.0 Q14.8 23.6 14.8 20.8 Z"/><path d="M18.4 24.0 Q19.0 23.2 19.0 22.0 L19.0 20.1 L31 20.1 Q31 24.0 27.6 24.0 Z"/></g></svg>
<div class="abs" style="left:341px;top:773.1px;width:1536px;height:44.8px;background:#f5f5f5"></div>
<div class="abs" style="left:363px;top:786.8px;width:17.5px;height:17.5px;background:#fff;border:1px solid #b9b9b9;border-radius:3px"></div>
<div class="abs" style="left:403px;width:155px;top:785.5px;font-size:17px;line-height:20px;color:#333;text-align:center">1620272</div>
<div class="abs" style="left:569px;top:785.5px;font-size:17px;line-height:20px;color:#333;white-space:nowrap">Bryan Funk</div>
<div class="abs" style="left:946px;width:233px;top:785.5px;font-size:17px;line-height:20px;color:#333;text-align:center">Expired</div>
<div class="abs dt" style="left:1179px;width:233px;top:785.5px;font-size:17px;line-height:20px;color:#333;text-align:center">2021-03-04</div>
<div class="abs dt" style="left:1412px;width:232px;top:785.5px;font-size:17px;line-height:20px;color:#333;text-align:center">2022-03-04</div>
<div class="abs abtn" style="left:1669.1px;top:779.5px"></div>
<svg class="abs" style="left:1669.1px;top:779.5px" width="42" height="32" viewBox="0 0 42 32"><circle cx="21.5" cy="12.0" r="4.15" fill="#0287cf"/><path d="M14.1 24 L14.1 20.6 Q14.1 17 17.7 17 L25.3 17 Q28.9 17 28.9 20.6 L28.9 24 Z" fill="#0287cf"/></svg>
<div class="abs abtn" style="left:1740.1px;top:779.5px"></div>
<svg class="abs" style="left:1740.1px;top:779.5px" width="42" height="32" viewBox="0 0 42 32"><path d="M13.2 23 A9.1 9.1 0 1 1 29.0 23 Z" fill="#0287cf"/><g fill="#fff"><circle cx="16.65" cy="13.85" r="0.9"/><circle cx="21.0" cy="11.9" r="0.9"/><circle cx="25.7" cy="13.85" r="0.9"/><circle cx="15.0" cy="19.0" r="0.9"/><circle cx="27.0" cy="19.0" r="0.9"/><path d="M20.2 20.3 L23.3 12.4 L24.1 12.6 L21.6 20.7 Z"/><circle cx="20.85" cy="20.6" r="1.7"/></g></svg>
<div class="abs abtn" style="left:1811.1px;top:779.5px"></div>
<svg class="abs" style="left:1811.1px;top:779.5px" width="42" height="32" viewBox="0 0 42 32"><g fill="#0287cf"><path d="M10.7 9 Q10.7 8.1 11.6 8.1 L13.7 8.1 L13.7 11.9 L11.6 11.9 Q10.7 11.9 10.7 11 Z"/><path d="M14.8 7.8 L24.1 7.8 Q27.9 7.8 27.9 11.6 L27.9 18.5 L18.6 18.5 Q16.9 18.5 16.9 20.2 L16.9 22.3 Q16.9 23.4 17.6 24.0 Q14.8 23.6 14.8 20.8 Z"/><path d="M18.4 24.0 Q19.0 23.2 19.0 22.0 L19.0 20.1 L31 20.1 Q31 24.0 27.6 24.0 Z"/></g></svg>
<div class="abs" style="left:341px;top:817.9px;width:1536px;height:44.8px;background:#fff"></div>
<div class="abs" style="left:363px;top:831.6px;width:17.5px;height:17.5px;background:#fff;border:1px solid #b9b9b9;border-radius:3px"></div>
<div class="abs" style="left:403px;width:155px;top:830.3px;font-size:17px;line-height:20px;color:#333;text-align:center">1620273</div>
<div class="abs" style="left:569px;top:830.3px;font-size:17px;line-height:20px;color:#333;white-space:nowrap">Cameron Watson</div>
<div class="abs" style="left:946px;width:233px;top:830.3px;font-size:17px;line-height:20px;color:#333;text-align:center">Expired</div>
<div class="abs dt" style="left:1179px;width:233px;top:830.3px;font-size:17px;line-height:20px;color:#333;text-align:center">2021-03-04</div>
<div class="abs dt" style="left:1412px;width:232px;top:830.3px;font-size:17px;line-height:20px;color:#333;text-align:center">2022-03-04</div>
<div class="abs abtn" style="left:1669.1px;top:824.3px"></div>
<svg class="abs" style="left:1669.1px;top:824.3px" width="42" height="32" viewBox="0 0 42 32"><circle cx="21.5" cy="12.0" r="4.15" fill="#0287cf"/><path d="M14.1 24 L14.1 20.6 Q14.1 17 17.7 17 L25.3 17 Q28.9 17 28.9 20.6 L28.9 24 Z" fill="#0287cf"/></svg>
<div class="abs abtn" style="left:1740.1px;top:824.3px"></div>
<svg class="abs" style="left:1740.1px;top:824.3px" width="42" height="32" viewBox="0 0 42 32"><path d="M13.2 23 A9.1 9.1 0 1 1 29.0 23 Z" fill="#0287cf"/><g fill="#fff"><circle cx="16.65" cy="13.85" r="0.9"/><circle cx="21.0" cy="11.9" r="0.9"/><circle cx="25.7" cy="13.85" r="0.9"/><circle cx="15.0" cy="19.0" r="0.9"/><circle cx="27.0" cy="19.0" r="0.9"/><path d="M20.2 20.3 L23.3 12.4 L24.1 12.6 L21.6 20.7 Z"/><circle cx="20.85" cy="20.6" r="1.7"/></g></svg>
<div class="abs abtn" style="left:1811.1px;top:824.3px"></div>
<svg class="abs" style="left:1811.1px;top:824.3px" width="42" height="32" viewBox="0 0 42 32"><g fill="#0287cf"><path d="M10.7 9 Q10.7 8.1 11.6 8.1 L13.7 8.1 L13.7 11.9 L11.6 11.9 Q10.7 11.9 10.7 11 Z"/><path d="M14.8 7.8 L24.1 7.8 Q27.9 7.8 27.9 11.6 L27.9 18.5 L18.6 18.5 Q16.9 18.5 16.9 20.2 L16.9 22.3 Q16.9 23.4 17.6 24.0 Q14.8 23.6 14.8 20.8 Z"/><path d="M18.4 24.0 Q19.0 23.2 19.0 22.0 L19.0 20.1 L31 20.1 Q31 24.0 27.6 24.0 Z"/></g></svg>
<div class="abs" style="left:341px;top:862.7px;width:1536px;height:44.8px;background:#f5f5f5"></div>
<div class="abs" style="left:363px;top:876.4px;width:17.5px;height:17.5px;background:#fff;border:1px solid #b9b9b9;border-radius:3px"></div>
<div class="abs" style="left:403px;width:155px;top:875.1px;font-size:17px;line-height:20px;color:#333;text-align:center">1620275</div>
<div class="abs" style="left:569px;top:875.1px;font-size:17px;line-height:20px;color:#333;white-space:nowrap">Alek Jetsel</div>
<div class="abs" style="left:946px;width:233px;top:875.1px;font-size:17px;line-height:20px;color:#333;text-align:center">Active</div>
<div class="abs dt" style="left:1179px;width:233px;top:875.1px;font-size:17px;line-height:20px;color:#333;text-align:center">2024-02-06</div>
<div class="abs dt" style="left:1412px;width:232px;top:875.1px;font-size:17px;line-height:20px;color:#333;text-align:center"></div>
<div class="abs abtn" style="left:1669.1px;top:869.1px"></div>
<svg class="abs" style="left:1669.1px;top:869.1px" width="42" height="32" viewBox="0 0 42 32"><circle cx="21.5" cy="12.0" r="4.15" fill="#0287cf"/><path d="M14.1 24 L14.1 20.6 Q14.1 17 17.7 17 L25.3 17 Q28.9 17 28.9 20.6 L28.9 24 Z" fill="#0287cf"/></svg>
<div class="abs abtn" style="left:1740.1px;top:869.1px"></div>
<svg class="abs" style="left:1740.1px;top:869.1px" width="42" height="32" viewBox="0 0 42 32"><path d="M13.2 23 A9.1 9.1 0 1 1 29.0 23 Z" fill="#0287cf"/><g fill="#fff"><circle cx="16.65" cy="13.85" r="0.9"/><circle cx="21.0" cy="11.9" r="0.9"/><circle cx="25.7" cy="13.85" r="0.9"/><circle cx="15.0" cy="19.0" r="0.9"/><circle cx="27.0" cy="19.0" r="0.9"/><path d="M20.2 20.3 L23.3 12.4 L24.1 12.6 L21.6 20.7 Z"/><circle cx="20.85" cy="20.6" r="1.7"/></g></svg>
<div class="abs abtn" style="left:1811.1px;top:869.1px"></div>
<svg class="abs" style="left:1811.1px;top:869.1px" width="42" height="32" viewBox="0 0 42 32"><g fill="#0287cf"><path d="M10.7 9 Q10.7 8.1 11.6 8.1 L13.7 8.1 L13.7 11.9 L11.6 11.9 Q10.7 11.9 10.7 11 Z"/><path d="M14.8 7.8 L24.1 7.8 Q27.9 7.8 27.9 11.6 L27.9 18.5 L18.6 18.5 Q16.9 18.5 16.9 20.2 L16.9 22.3 Q16.9 23.4 17.6 24.0 Q14.8 23.6 14.8 20.8 Z"/><path d="M18.4 24.0 Q19.0 23.2 19.0 22.0 L19.0 20.1 L31 20.1 Q31 24.0 27.6 24.0 Z"/></g></svg>
<div class="abs" style="left:341px;top:907.5px;width:1536px;height:44.8px;background:#fff"></div>
<div class="abs" style="left:363px;top:921.2px;width:17.5px;height:17.5px;background:#fff;border:1px solid #b9b9b9;border-radius:3px"></div>
<div class="abs" style="left:403px;width:155px;top:919.9px;font-size:17px;line-height:20px;color:#333;text-align:center">1620289</div>
<div class="abs" style="left:569px;top:919.9px;font-size:17px;line-height:20px;color:#333;white-space:nowrap">Alek Jetsel</div>
<div class="abs" style="left:946px;width:233px;top:919.9px;font-size:17px;line-height:20px;color:#333;text-align:center">Active</div>
<div class="abs dt" style="left:1179px;width:233px;top:919.9px;font-size:17px;line-height:20px;color:#333;text-align:center">2025-06-11</div>
<div class="abs dt" style="left:1412px;width:232px;top:919.9px;font-size:17px;line-height:20px;color:#333;text-align:center"></div>
<div class="abs abtn" style="left:1669.1px;top:913.9px"></div>
<svg class="abs" style="left:1669.1px;top:913.9px" width="42" height="32" viewBox="0 0 42 32"><circle cx="21.5" cy="12.0" r="4.15" fill="#0287cf"/><path d="M14.1 24 L14.1 20.6 Q14.1 17 17.7 17 L25.3 17 Q28.9 17 28.9 20.6 L28.9 24 Z" fill="#0287cf"/></svg>
<div class="abs abtn" style="left:1740.1px;top:913.9px"></div>
<svg class="abs" style="left:1740.1px;top:913.9px" width="42" height="32" viewBox="0 0 42 32"><path d="M13.2 23 A9.1 9.1 0 1 1 29.0 23 Z" fill="#0287cf"/><g fill="#fff"><circle cx="16.65" cy="13.85" r="0.9"/><circle cx="21.0" cy="11.9" r="0.9"/><circle cx="25.7" cy="13.85" r="0.9"/><circle cx="15.0" cy="19.0" r="0.9"/><circle cx="27.0" cy="19.0" r="0.9"/><path d="M20.2 20.3 L23.3 12.4 L24.1 12.6 L21.6 20.7 Z"/><circle cx="20.85" cy="20.6" r="1.7"/></g></svg>
<div class="abs abtn" style="left:1811.1px;top:913.9px"></div>
<svg class="abs" style="left:1811.1px;top:913.9px" width="42" height="32" viewBox="0 0 42 32"><g fill="#0287cf"><path d="M10.7 9 Q10.7 8.1 11.6 8.1 L13.7 8.1 L13.7 11.9 L11.6 11.9 Q10.7 11.9 10.7 11 Z"/><path d="M14.8 7.8 L24.1 7.8 Q27.9 7.8 27.9 11.6 L27.9 18.5 L18.6 18.5 Q16.9 18.5 16.9 20.2 L16.9 22.3 Q16.9 23.4 17.6 24.0 Q14.8 23.6 14.8 20.8 Z"/><path d="M18.4 24.0 Q19.0 23.2 19.0 22.0 L19.0 20.1 L31 20.1 Q31 24.0 27.6 24.0 Z"/></g></svg>
<div class="abs" style="left:403px;top:459px;width:1px;height:493px;background:#d2d2d2"></div>
<div class="abs" style="left:558px;top:459px;width:1px;height:493px;background:#d2d2d2"></div>
<div class="abs" style="left:946px;top:459px;width:1px;height:493px;background:#d2d2d2"></div>
<div class="abs" style="left:1179px;top:459px;width:1px;height:493px;background:#d2d2d2"></div>
<div class="abs" style="left:1412px;top:459px;width:1px;height:493px;background:#d2d2d2"></div>
<div class="abs" style="left:1644px;top:459px;width:1px;height:493px;background:#d2d2d2"></div>
<div class="abs" style="left:1877px;top:459px;width:15px;height:493px;background:#fff"></div>
<svg class="abs" style="left:1879px;top:464px" width="10" height="7" viewBox="0 0 10 7"><path d="M0.5 6.5 L9.5 6.5 L5 0.8 Z" fill="#888"/></svg>
<svg class="abs" style="left:1879px;top:940px" width="10" height="7" viewBox="0 0 10 7"><path d="M0.5 0.5 L9.5 0.5 L5 6.2 Z" fill="#888"/></svg>
<div class="abs" style="left:341px;top:952px;width:1551px;height:1px;background:#cfcfcf"></div>
<div class="abs" style="left:346px;top:959px;width:166px;height:34px;background:#f9f9f9;border:1px solid #d5d5d5;border-radius:4px"></div>
<div class="abs" style="left:378.5px;top:960px;width:1px;height:32px;background:#dcdcdc"></div>
<div class="abs" style="left:411px;top:960px;width:1px;height:32px;background:#dcdcdc"></div>
<div class="abs" style="left:444.5px;top:960px;width:1px;height:32px;background:#dcdcdc"></div>
<div class="abs" style="left:478px;top:960px;width:1px;height:32px;background:#dcdcdc"></div>
<div class="abs" style="left:411px;top:959px;width:34px;height:34px;background:#3f88c9"></div>
<div class="abs" style="left:411px;top:967px;width:34px;text-align:center;font-size:17px;line-height:20px;color:#fff">1</div>
<svg class="abs" style="left:356px;top:971px" width="12" height="12" viewBox="0 0 12 12"><rect x="1.5" y="2" width="1.6" height="8" fill="#555"/><path d="M9.5 2 L9.5 10 L4 6 Z" fill="#555"/></svg>
<svg class="abs" style="left:389px;top:971px" width="12" height="12" viewBox="0 0 12 12"><path d="M8.5 2 L8.5 10 L3 6 Z" fill="#555"/></svg>
<svg class="abs" style="left:455px;top:971px" width="12" height="12" viewBox="0 0 12 12"><path d="M3.5 2 L3.5 10 L9 6 Z" fill="#555"/></svg>
<svg class="abs" style="left:488px;top:971px" width="12" height="12" viewBox="0 0 12 12"><path d="M2.5 2 L2.5 10 L8 6 Z" fill="#555"/><rect x="8.9" y="2" width="1.6" height="8" fill="#555"/></svg>
<div class="abs" style="left:541px;top:959px;width:72px;height:34px;background:#fff;border:1px solid #d5d5d5;border-radius:4px"></div>
<div class="abs" style="left:548px;top:967px;font-size:17px;line-height:20px;color:#333">20</div>
<svg class="abs" style="left:592px;top:973px" width="10" height="8" viewBox="0 0 10 8"><path d="M1 1 L9 1 L5 7 Z" fill="#222"/></svg>
<div class="abs" style="left:1600px;width:270px;top:966px;font-size:16.2px;line-height:20px;color:#999;text-align:right">1 - 11 of 11 items</div>
<div class="abs" style="left:576px;top:367px;width:160px;height:160px;background:#fff;border-radius:8px;box-shadow:0 4px 12px rgba(0,0,0,0.16),0 10px 40px rgba(0,0,0,0.16)"></div>
<div class="abs" style="left:604px;top:390px;font-size:17px;line-height:20px;color:#333;white-space:nowrap">All Earned</div>
<div class="abs" style="left:604px;top:438px;font-size:17px;line-height:20px;color:#333;white-space:nowrap">Expired</div>
<div class="abs" style="left:604px;top:486px;font-size:17px;line-height:20px;color:#333;white-space:nowrap">Active</div>
<div class="abs" style="left:559.5px;top:314.2px;width:199px;height:226.2px;border:8px solid #ff0000;border-radius:9px"></div>
<div class="abs" style="left:1756px;top:1006px;width:64px;height:64px;border-radius:50%;background:#e8892e;box-shadow:0 2px 8px rgba(0,0,0,0.2)"></div>
<div class="abs" style="left:1775px;top:1029px;width:27px;height:20px;border-radius:6px;background:#3a2e22"></div>
<div class="abs" style="left:1831px;top:1006px;width:64px;height:64px;border-radius:50%;background:#e8892e;box-shadow:0 2px 8px rgba(0,0,0,0.2)"></div>
<div class="abs" style="left:1840px;top:1015px;width:46px;height:46px;border-radius:50%;background:#fff"></div>
<svg class="abs" style="left:1840px;top:1015px" width="46" height="20" viewBox="0 0 46 20"><path d="M20.5 3.2 C17 6 15 10.5 15.5 17" fill="none" stroke="#e8892e" stroke-width="1.6"/><circle cx="36.4" cy="15.6" r="1.4" fill="#e8892e"/></svg>
<div id="vscroll" class="abs"></div>
<svg class="abs" style="left:1905px;top:3px" width="15" height="10" viewBox="0 0 15 10"><path d="M3.8 8 L11.2 8 L7.5 2.8 Z" fill="#8a8a8a" stroke="#8a8a8a" stroke-width="1.6" stroke-linejoin="round"/></svg>
<div class="abs" style="left:1908px;top:178px;width:9px;height:854px;background:#8a8a8a;border-radius:4.5px 4.5px 0 0"></div>
</body></html>
